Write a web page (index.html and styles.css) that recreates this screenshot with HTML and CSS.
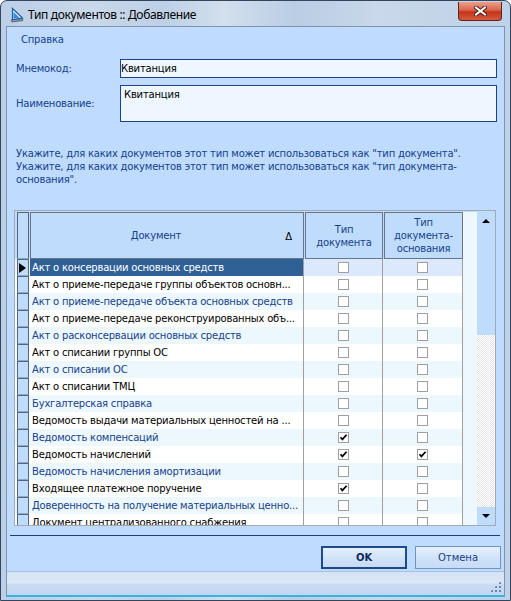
FILE: index.html
```html
<!DOCTYPE html>
<html>
<head>
  <meta charset="utf-8">
  <link rel="stylesheet" href="styles.css">
</head>
<body>
  <div class="window">
    <div class="titlebar">
      <svg class="app-icon" width="16" height="16" viewBox="0 0 16 16">
        <path d="M2 13 L13 11.5 L14 13.5 L3 15 Z" fill="#8c9aab" stroke="#4d5a6b" stroke-width="0.8"/>
        <path d="M3.5 1.5 L13.5 11 L3.5 12.5 Z" fill="#dceefe" stroke="#1f5fa8" stroke-width="1.2"/>
        <path d="M4.5 5 L10.5 10.8 L4.5 11.6 Z" fill="#3a8ad6"/>
      </svg>
      <span class="title">Тип документов :: Добавление</span>
      <div class="close-btn">
        <svg width="13" height="10" viewBox="0 0 13 10">
          <path d="M2 1.5 L11 8.5 M11 1.5 L2 8.5" stroke="#4a1a12" stroke-width="4" stroke-linecap="square"/>
          <path d="M2 1.5 L11 8.5 M11 1.5 L2 8.5" stroke="#ffffff" stroke-width="2" stroke-linecap="square"/>
        </svg>
      </div>
    </div>

    <div class="client">
      <div class="menubar"><span class="menu-item">Справка</span></div>

      <div class="form">
        <div class="field">
          <label class="caption">Мнемокод:</label>
          <input class="edit" type="text" value="Квитанция">
        </div>
        <div class="field field-memo">
          <label class="caption">Наименование:</label>
          <textarea class="edit memo">Квитанция</textarea>
        </div>

        <p class="hint">
          Укажите, для каких документов этот тип может использоваться как "тип документа".<br>
          Укажите, для каких документов этот тип может использоваться как "тип документа-<br>
          основания".
        </p>

        <div class="grid">
          <div class="grid-body">
            <div class="grid-head">
              <div class="ind ind-head"></div>
              <div class="hcell hcell-doc">Документ<span class="sort">&#916;</span></div>
              <div class="hcell hcell-c1">Тип<br>документа</div>
              <div class="hcell hcell-c2">Тип<br>документа-<br>основания</div>
            </div>
            <div id="rows"></div>
          </div>
          <div class="grid-filler"></div>
          <div class="vscroll">
            <div class="sb-btn"><span class="arrow-up"></span></div>
            <div class="sb-thumb"></div>
            <div class="sb-track"></div>
            <div class="sb-btn"><span class="arrow-down"></span></div>
          </div>
        </div>

        <div class="divider"></div>

        <div class="buttons">
          <button class="btn btn-default">OK</button>
          <button class="btn">Отмена</button>
        </div>
      </div>

      <div class="statusbar"><span class="grip"></span></div>
    </div>
  </div>

  <script>
    // name, "тип документа", "тип документа-основания"
    const docs = [
      ["Акт о консервации основных средств", false, false],
      ["Акт о приеме-передаче группы объектов основн...", false, false],
      ["Акт о приеме-передаче объекта основных средств", false, false],
      ["Акт о приеме-передаче реконструированных объ...", false, false],
      ["Акт о расконсервации основных средств", false, false],
      ["Акт о списании группы ОС", false, false],
      ["Акт о списании ОС", false, false],
      ["Акт о списании ТМЦ", false, false],
      ["Бухгалтерская справка", false, false],
      ["Ведомость выдачи материальных ценностей на ...", false, false],
      ["Ведомость компенсаций", true, false],
      ["Ведомость начислений", true, true],
      ["Ведомость начисления амортизации", false, false],
      ["Входящее платежное поручение", true, false],
      ["Доверенность на получение материальных ценно...", false, false],
      ["Документ централизованного снабжения", false, false]
    ];

    const tick = '<svg width="9" height="9" viewBox="0 0 9 9"><path d="M1.5 4.2 L3.4 6.4 L7.6 1.8" fill="none" stroke="#000" stroke-width="1.7"/></svg>';

    const rowsBox = document.getElementById("rows");
    docs.forEach(function(d, i) {
      const row = document.createElement("div");
      row.className = "row" + (i % 2 === 0 ? " row-alt" : "") + (i === 0 ? " row-sel" : "");
      row.innerHTML =
        '<div class="ind">' + (i === 0 ? '<span class="cur"></span>' : '') + '</div>' +
        '<div class="cell-doc">' + d[0] + '</div>' +
        '<div class="cell-chk c1"><span class="check">' + (d[1] ? tick : '') + '</span></div>' +
        '<div class="cell-chk c2"><span class="check">' + (d[2] ? tick : '') + '</span></div>';
      rowsBox.appendChild(row);
    });
  </script>
</body>
</html>
```

FILE: styles.css
```css
* {
  box-sizing: border-box;
}

body {
  margin: 0;
  background: #ffffff;
  font-family: "DejaVu Sans", sans-serif;
  font-size: 10px;
  letter-spacing: -0.2px;
}

.window {
  width: 511px;
  height: 601px;
  border: 1px solid #34465e;
  border-radius: 7px 7px 0 0;
  background: linear-gradient(90deg, #bccfe6 0%, #c9d8ea 18%, #bdd0e6 32%, #d2dfee 44%, #bacde4 58%, #c9d8ea 74%, #bfd1e7 100%);
  padding: 0 5px 3px 5px;
  display: flex;
  flex-direction: column;
}

/* title bar */
.titlebar {
  height: 25px;
  display: flex;
  align-items: flex-start;
  flex-shrink: 0;
}

.app-icon {
  margin: 6px 0 0 3px;
}

.title {
  margin: 6px 0 0 3px;
  font-family: "Noto Sans", sans-serif;
  font-size: 12px;
  letter-spacing: -0.35px;
  line-height: 16px;
  color: #000;
}

.close-btn {
  margin: 1px 3px 0 auto;
  width: 44px;
  height: 19px;
  border: 1px solid #5b261c;
  border-top: none;
  border-radius: 0 0 4px 4px;
  background: linear-gradient(#eba08a 0%, #dc654b 45%, #c4341a 55%, #d65a3e 100%);
  display: flex;
  align-items: center;
  justify-content: center;
}

/* client area */
.client {
  flex: 1;
  border: 1px solid #7f93ad;
  border-bottom: 2px solid #39b4e0;
  background: #bfdbff;
  display: flex;
  flex-direction: column;
}

.menubar {
  height: 26px;
  line-height: 26px;
  padding-left: 14px;
  color: #15428b;
}

.form {
  padding: 0 8px 0 7px;
}

.field {
  display: flex;
  align-items: center;
  margin-top: 6px;
  height: 19px;
}

.field-memo {
  margin-top: 7px;
  height: 37px;
}

.caption {
  width: 106px;
  padding-left: 2px;
  color: #15428b;
}

.edit {
  flex: 1;
  height: 19px;
  margin: 0 -1px 0 0;
  border: 1px solid #1b4389;
  background: #eef7ff;
  font-family: "DejaVu Sans", sans-serif;
  font-size: 10px;
  letter-spacing: -0.2px;
  color: #000;
  padding: 0 0 0 0;
  outline: none;
}

.memo {
  height: 37px;
  resize: none;
  padding: 3px 3px;
  overflow: hidden;
}

.hint {
  margin: 25px 0 0 2px;
  line-height: 13px;
  color: #15428b;
}

/* documents grid */
.grid {
  margin-top: 24px;
  height: 316px;
  border: 1px solid #a3a9b2;
  padding-top: 1px;
  background: #bfdbff;
  display: flex;
}

.grid-body {
  width: 448px;
  overflow: hidden;
}

.grid-head {
  display: flex;
  height: 47px;
}

.ind {
  width: 12px;
  margin: 0 1px 0 2px;
  border: 1px solid #55667e;
  border-bottom-color: #8ea7c8;
  background: #c0dcfc;
  flex-shrink: 0;
  position: relative;
}

.hcell {
  border: 1px solid #6a778a;
  background: #c0dcfc;
  color: #15428b;
  text-align: center;
  line-height: 13px;
  display: flex;
  align-items: center;
  justify-content: center;
}

.hcell-doc {
  width: 274px;
  padding-right: 22px;
  position: relative;
}

.sort {
  position: absolute;
  right: 11px;
  top: 17px;
  color: #000;
  font-size: 10px;
}

.hcell-c1 {
  width: 78px;
  margin-left: 1px;
}

.hcell-c2 {
  width: 79px;
  margin-left: 1px;
}

.row {
  display: flex;
  height: 17px;
  line-height: 17px;
  background: #ffffff;
  color: #000;
}

.row-alt {
  background: #edf7fe;
  color: #15428b;
}

.cell-doc {
  width: 273px;
  padding-left: 2px;
  white-space: nowrap;
  overflow: hidden;
  text-overflow: ellipsis;
}

.cell-chk {
  border-left: 1px solid #a0a0a0;
  display: flex;
  align-items: center;
  justify-content: center;
}

.c1 {
  width: 79px;
  padding-left: 1px;
}

.c2 {
  width: 81px;
  border-right: 1px solid #a0a0a0;
}

.row-sel .cell-doc {
  background: #2f6096;
  color: #ffffff;
}

.row-sel .cell-chk {
  background: #dce8fc;
}

.check {
  width: 11px;
  height: 11px;
  border: 1px solid #a0a0a0;
  background: #ffffff;
  display: flex;
  align-items: center;
  justify-content: center;
}

.cur {
  position: absolute;
  left: 1px;
  top: 3px;
  border-left: 7px solid #000;
  border-top: 5px solid transparent;
  border-bottom: 5px solid transparent;
}

.grid-filler {
  width: 14px;
  background: #edf7fe;
}

.vscroll {
  width: 18px;
  display: flex;
  flex-direction: column;
  padding-bottom: 1px;
}

.sb-btn {
  height: 17px;
  background: #c0dcfc;
  display: flex;
  align-items: center;
  justify-content: center;
}

.sb-thumb {
  height: 106px;
  background: #c0dcfc;
}

.sb-track {
  flex: 1;
  background: repeating-conic-gradient(#e6e6e6 0 25%, #ffffff 0 50%) 0 0 / 2px 2px;
}

.arrow-up {
  border-bottom: 4px solid #000;
  border-left: 4px solid transparent;
  border-right: 4px solid transparent;
}

.arrow-down {
  border-top: 4px solid #000;
  border-left: 4px solid transparent;
  border-right: 4px solid transparent;
}

.divider {
  margin: 9px -4px 0 -4px;
  height: 1px;
  background: #1c3a8a;
}

.buttons {
  display: flex;
  justify-content: flex-end;
  gap: 8px;
  margin: 10px -5px 0 0;
}

.btn {
  width: 86px;
  height: 23px;
  border: 1px solid #6f95c6;
  background: linear-gradient(#e6f0fd, #d2e3f9 50%, #c6dbf6);
  font-family: "DejaVu Sans", sans-serif;
  font-size: 10px;
  color: #15428b;
  padding: 0;
}

.btn-default {
  border: 2px solid #1d4a8c;
  font-weight: bold;
  color: #0f2a5c;
}

.statusbar {
  margin-top: auto;
  height: 24px;
  border-top: 1px solid #a9bfdc;
  background: linear-gradient(#d3e2f5, #dde8f7 45%, #c9dbf2 55%, #c2d6f1);
  position: relative;
}

.grip {
  position: absolute;
  right: 3px;
  bottom: 3px;
  width: 11px;
  height: 11px;
  background:
    radial-gradient(circle, #6e86a8 0.9px, transparent 1.2px) 0 0 / 4px 4px;
  clip-path: polygon(100% 0, 100% 100%, 0 100%);
}
```
